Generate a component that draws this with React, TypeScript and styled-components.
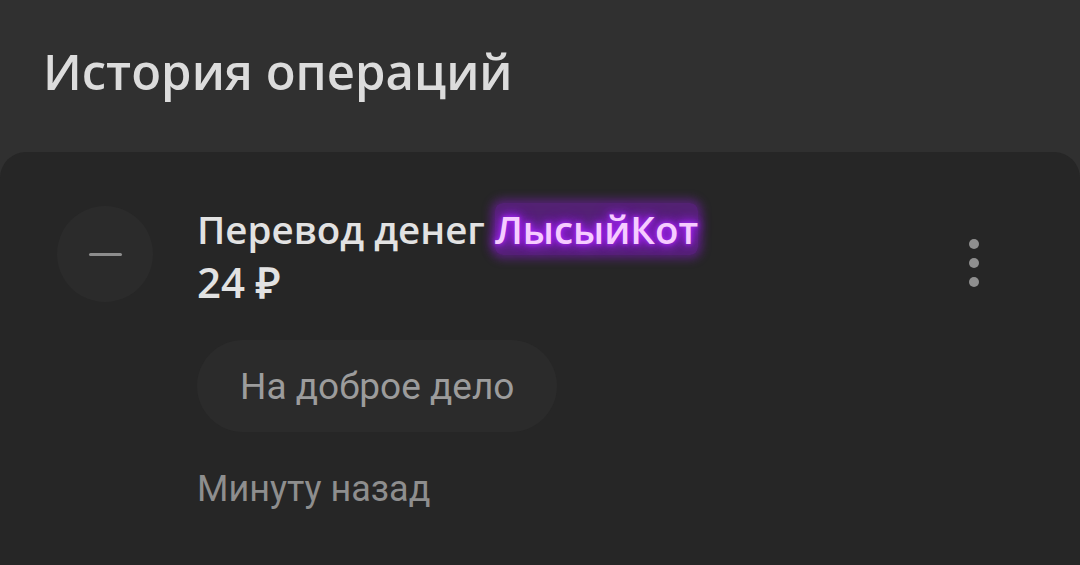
import React from "react";
import styled, { createGlobalStyle } from "styled-components";

const Global = createGlobalStyle`
  html, body { margin: 0; padding: 0; background: #303030; }
  body { width: 1080px; height: 565px; overflow: hidden; }
`;

const Page = styled.div`
  width: 1080px;
  height: 565px;
  background: #303030;
  display: flex;
  flex-direction: column;
  overflow: hidden;
`;

const Title = styled.h1`
  margin: 0;
  padding: 38px 0 0 43px;
  height: 152px;
  flex-shrink: 0;
  box-sizing: border-box;
  font-family: "Open Sans", sans-serif;
  font-weight: 600;
  font-size: 49px;
  line-height: 66px;
  color: #dcdcdc;
`;

const Card = styled.div`
  flex: 1;
  background: #262626;
  border-radius: 26px 26px 0 0;
  display: flex;
  padding: 52px 0 0 57px;
  box-sizing: border-box;
`;

const Avatar = styled.div`
  width: 96px;
  height: 96px;
  margin-top: 2px;
  border-radius: 50%;
  background: #2b2b2b;
  flex-shrink: 0;
  display: flex;
  align-items: center;
  justify-content: center;
`;

const Minus = styled.div`
  width: 33px;
  height: 3px;
  border-radius: 2px;
  background: #8d8d8d;
`;

const Body = styled.div`
  flex: 1;
  margin-left: 44px;
  display: flex;
  flex-direction: column;
  align-items: flex-start;
`;

const Name = styled.div`
  font-family: "Open Sans", sans-serif;
  font-weight: 600;
  font-size: 38.5px;
  line-height: 50px;
  color: #e2e2e2;
`;

const Nick = styled.span`
  color: #f6ccff;
  background: rgba(140, 30, 210, 0.45);
  border-radius: 8px;
  box-shadow: 0 0 10px 4px rgba(140, 30, 210, 0.45);
  text-shadow:
    0 0 4px #a22cf0,
    0 0 8px #9a20e8,
    0 0 12px #9a20e8,
    0 0 16px #8a18d8;
`;

const Amount = styled.div`
  margin-top: 2px;
  font-family: "Open Sans", sans-serif;
  font-weight: 600;
  font-size: 42px;
  line-height: 52px;
  color: #e2e2e2;
`;

const Note = styled.div`
  margin-top: 32px;
  height: 92px;
  padding: 0 43px;
  border-radius: 46px;
  background: #2b2b2b;
  display: flex;
  align-items: center;
  font-family: Roboto, sans-serif;
  font-size: 37px;
  color: #9c9c9c;
`;

const Time = styled.div`
  margin-top: 35px;
  font-family: Roboto, sans-serif;
  font-size: 36px;
  line-height: 44px;
  color: #8e8e8e;
`;

const Menu = styled.div`
  width: 40px;
  margin: 35px 86px 0 0;
  display: flex;
  flex-direction: column;
  align-items: center;
  gap: 9px;
  align-self: flex-start;
`;

const Dot = styled.span`
  width: 10px;
  height: 10px;
  border-radius: 50%;
  background: #8f8f8f;
`;

export default function App() {
  return (
    <Page>
      <Global />
      <Title>История операций</Title>
      <Card>
        <Avatar>
          <Minus />
        </Avatar>
        <Body>
          <Name>
            Перевод денег <Nick>ЛысыйКот</Nick>
          </Name>
          <Amount>24 ₽</Amount>
          <Note>На доброе дело</Note>
          <Time>Минуту назад</Time>
        </Body>
        <Menu>
          <Dot />
          <Dot />
          <Dot />
        </Menu>
      </Card>
    </Page>
  );
}
